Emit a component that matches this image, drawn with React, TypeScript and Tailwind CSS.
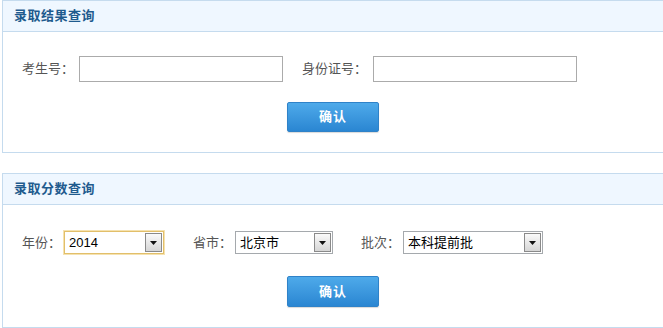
import React from "react";

const font = { fontFamily: '"Liberation Sans", "Noto Sans CJK SC", sans-serif' };

function Header({ title }: { title: string }) {
  return (
    <div className="h-[31px] bg-[#eff7ff] border-b border-[#c5dbee] flex items-center pl-[11px]">
      <span className="text-[13px] font-bold text-[#1f5b8e] tracking-[0.5px]">{title}</span>
    </div>
  );
}

function Button({ h }: { h: string }) {
  return (
    <div className="flex justify-center">
      <div className={`w-[92px] ${h} rounded-[2px] border border-[#2f82c8] bg-gradient-to-b from-[#4eaaea] to-[#2a86d2] shadow-[0_1px_1px_rgba(0,0,0,0.15)] flex items-center justify-center`}>
        <span className="text-[13px] font-bold text-white tracking-[1px]">确认</span>
      </div>
    </div>
  );
}

function Select({ value, width, focused }: { value: string; width: string; focused?: boolean }) {
  return (
    <div
      className={`h-[23px] ${width} bg-white border flex items-center justify-between pl-[4px] pr-[1px] ${
        focused ? "border-[#e2bf6a] shadow-[0_0_0_1px_#f5e2b0]" : "border-[#a5a9ad]"
      }`}
    >
      <span className="text-[13px] text-black leading-none">{value}</span>
      <div className="w-[17px] h-[19px] border border-[#8a8a8a] bg-gradient-to-b from-[#fafafa] to-[#d6d6d6] flex items-center justify-center">
        <svg width="7" height="4" viewBox="0 0 7 4">
          <path d="M0 0H7L3.5 4Z" fill="#111" />
        </svg>
      </div>
    </div>
  );
}

export default function App() {
  return (
    <div className="w-[663px] h-[328px] overflow-hidden bg-white" style={font}>
      <div className="ml-[2px] w-[662px] border border-[#c5dbee]">
        <Header title="录取结果查询" />
        <div className="pt-[24px] pb-[20px] flex flex-col gap-[20px]">
          <div className="flex items-center pl-[19px] h-[26px]">
            <span className="text-[13px] text-[#555]">考生号：</span>
            <div className="ml-[5px] w-[204px] h-[26px] border border-[#ababab] bg-white" />
            <span className="ml-[19px] text-[13px] text-[#555]">身份证号：</span>
            <div className="ml-[6px] w-[204px] h-[26px] border border-[#ababab] bg-white" />
          </div>
          <Button h="h-[30px]" />
        </div>
      </div>
      <div className="ml-[2px] mt-[20px] w-[662px] border border-[#c5dbee]">
        <Header title="录取分数查询" />
        <div className="pt-[26px] pb-[20px] flex flex-col gap-[22px]">
          <div className="flex items-center pl-[19px] h-[23px]">
            <span className="text-[13px] text-[#555]">年份：</span>
            <div className="ml-[3px]">
              <Select value="2014" width="w-[100px]" focused />
            </div>
            <span className="ml-[29px] text-[13px] text-[#555]">省市：</span>
            <div className="ml-[3px]">
              <Select value="北京市" width="w-[98px]" />
            </div>
            <span className="ml-[28px] text-[13px] text-[#555]">批次：</span>
            <div className="ml-[3px]">
              <Select value="本科提前批" width="w-[140px]" />
            </div>
          </div>
          <Button h="h-[31px]" />
        </div>
      </div>
    </div>
  );
}
